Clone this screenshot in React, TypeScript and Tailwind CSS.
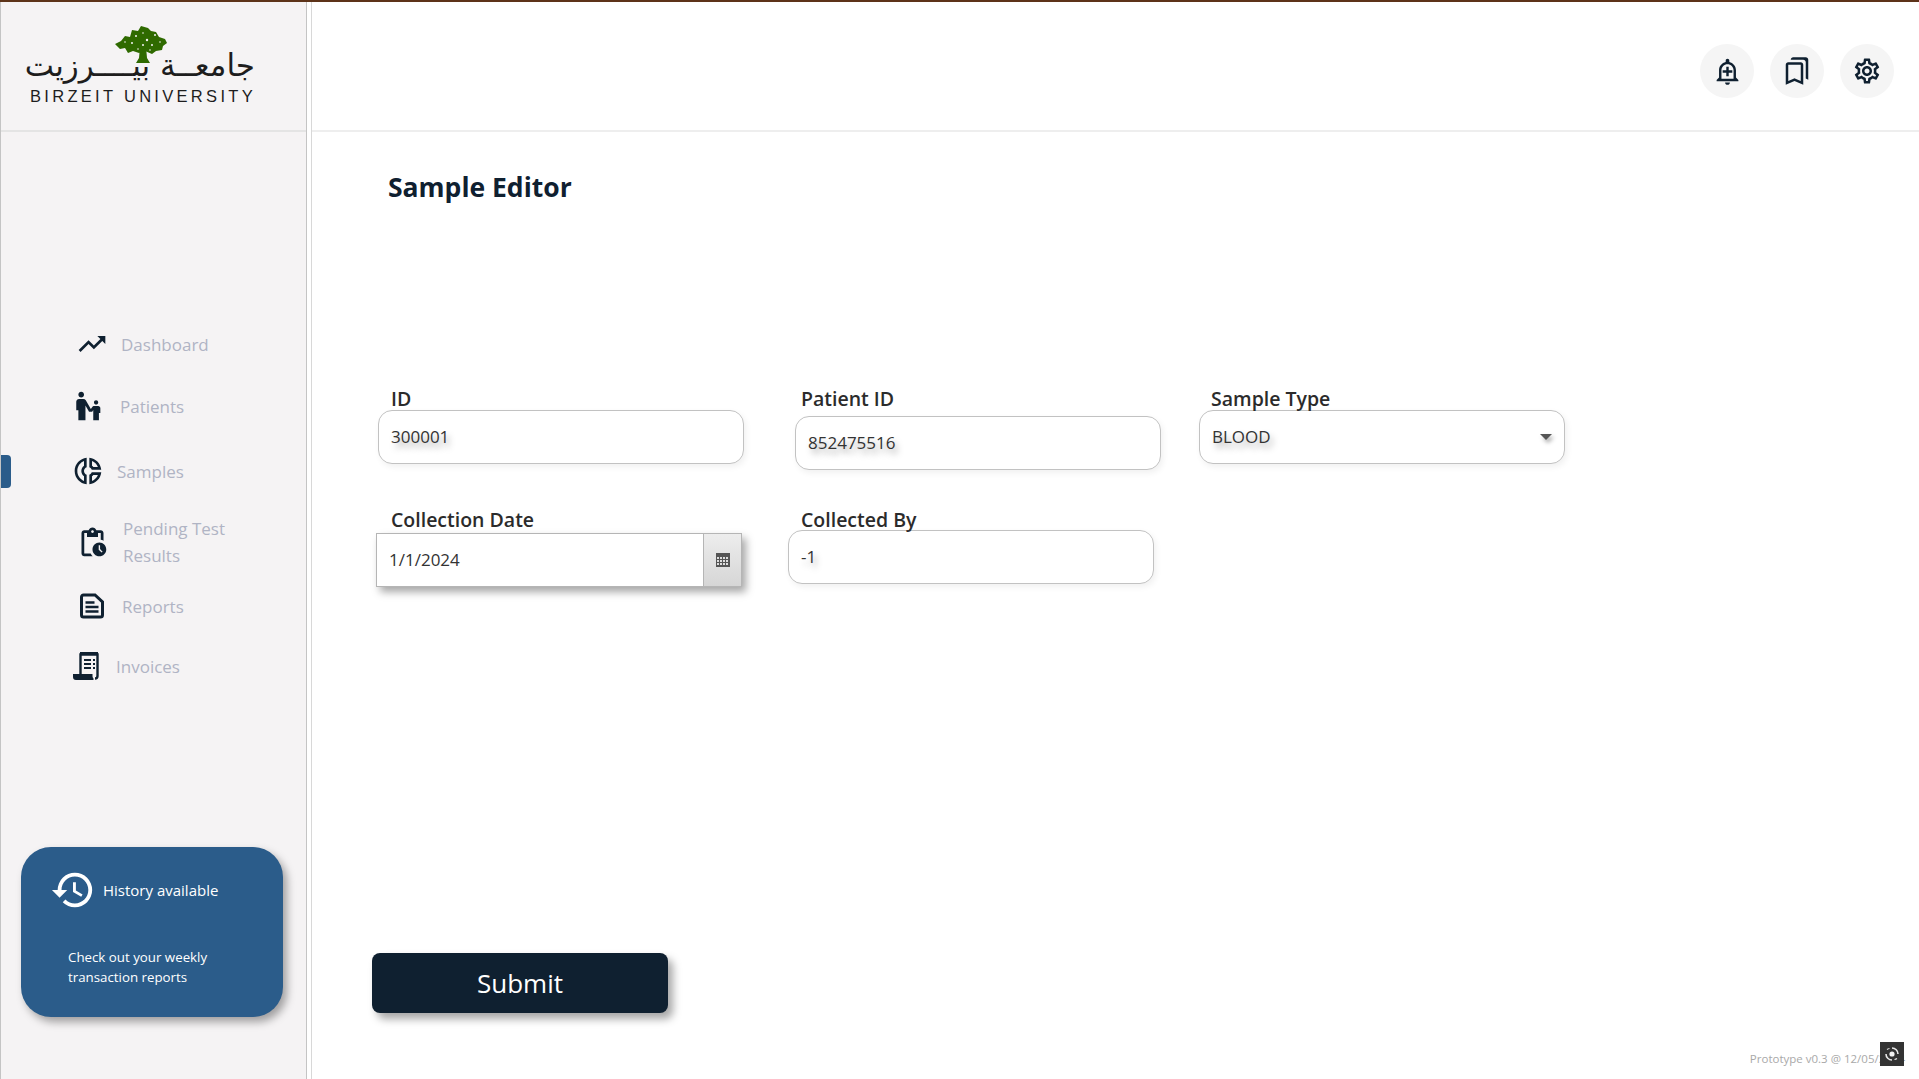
import type { ReactNode } from "react";
import {
  MdTrendingUp,
  MdEscalatorWarning,
  MdOutlineDonutSmall,
  MdOutlinePendingActions,
  MdHistory,
  MdOutlineAddAlert,
  MdOutlineBookmarks,
  MdOutlineSettings,
} from "react-icons/md";

const font = "font-['Open_Sans','Noto_Sans',sans-serif]";

function ReportsIcon() {
  return (
    <svg width="26" height="26" viewBox="0 0 26 26" fill="none" stroke="currentColor">
      <path d="M2.5 4a2 2 0 0 1 2-2H16l7.5 7v13a2 2 0 0 1-2 2h-17a2 2 0 0 1-2-2z" strokeWidth="3" />
      <path d="M6.5 9.5h9M6.5 14h13M6.5 18.5h13" strokeWidth="2.4" />
    </svg>
  );
}

function InvoicesIcon() {
  return (
    <svg width="27" height="28" viewBox="0 0 27 28" fill="none">
      <path d="M7.5 23V2.5h17V24a2.5 2.5 0 0 1-2.5 2.5" stroke="currentColor" strokeWidth="2.4" />
      <path d="M7 0h18v2H7z" fill="currentColor" />
      <path d="M11 7h7v2h-7zM20 7h2v2h-2zM11 11h7v2h-7zM20 11h2v2h-2zM11 15h7v2h-7zM20 15h2v2h-2z" fill="currentColor" />
      <path d="M0 22h19.5v2.5c0 .8.4 1.5 1 2v1.5H3a3 3 0 0 1-3-3z" fill="currentColor" />
    </svg>
  );
}

const navItems = [
  { label: "Dashboard", icon: <MdTrendingUp size={32} />, row: "mt-[196px] ml-[75px] h-[32px] gap-[13px]" },
  { label: "Patients", icon: <MdEscalatorWarning size={34} />, row: "mt-[29px] ml-[71px] h-[34px] gap-[14px]" },
  { label: "Samples", icon: <MdOutlineDonutSmall size={32} />, row: "mt-[32px] ml-[71px] h-[32px] gap-[13px]" },
  { label: "Pending Test Results", icon: <MdOutlinePendingActions size={33} />, row: "mt-[28px] ml-[75px] h-[54px] gap-[14px]", wrap: true },
  { label: "Reports", icon: <ReportsIcon />, row: "mt-[21px] ml-[78px] h-[32px] gap-[17px]" },
  { label: "Invoices", icon: <InvoicesIcon />, row: "mt-[28px] ml-[72px] h-[32px] gap-[16px]" },
];

function NavItem({ label, icon, row, wrap }: { label: string; icon: ReactNode; row: string; wrap?: boolean }) {
  return (
    <div className={`flex items-center ${row}`}>
      <span className="text-[#0f2030] shrink-0">{icon}</span>
      <span className={`text-[17px] leading-[27px] text-[#b0b4c4] ${wrap ? "w-[130px]" : ""}`}>{label}</span>
    </div>
  );
}

function Logo() {
  return (
    <div className="relative h-[130px] border-b-2 border-[#e4e4e4]">
      <svg className="absolute left-[113px] top-[23px]" width="58" height="39" viewBox="0 0 58 39">
        <path d="M26 22h6l1 11 3 5H22l3-5z" fill="#2f6a00" />
        <path
          d="M1 19l6-3 4-5 5 1 2-7 6 1 3-5 7 2 3 3 5 1 3 5 6 2 2 4-4 3-1 4-6 1-4 3-7-3-6 2-6-2-5 2-3-5-5 1z"
          fill="#2f6a00"
        />
        <g fill="#f5f3f4">
          <circle cx="22" cy="11" r="1" />
          <circle cx="29" cy="8" r="0.8" />
          <circle cx="33" cy="15" r="1.2" />
          <circle cx="41" cy="10" r="1" />
          <circle cx="29" cy="20" r="1" />
          <circle cx="38" cy="20" r="1" />
          <circle cx="46" cy="17" r="0.8" />
          <circle cx="18" cy="18" r="1" />
          <circle cx="24" cy="24" r="0.8" />
          <circle cx="36" cy="25" r="0.8" />
          <circle cx="11" cy="17" r="0.8" />
        </g>
      </svg>
      <div
        dir="rtl"
        className="absolute left-[28px] top-[41px] w-[226px] text-center whitespace-nowrap font-['DejaVu_Sans',sans-serif] text-[31px] leading-[44px] text-[#1d1d1d]"
      >
        جامعــة بيــــرزيت
      </div>
      <div className="absolute left-[29px] top-[85px] font-['Liberation_Sans',sans-serif] text-[16.5px] leading-[18px] tracking-[3.3px] whitespace-nowrap text-[#1d1d1d]">
        BIRZEIT UNIVERSITY
      </div>
    </div>
  );
}

function Sidebar() {
  return (
    <aside className="w-[307px] shrink-0 bg-[#f5f3f4] border-l border-r border-[#c4c4c4] flex flex-col relative">
      <Logo />
      <div className="absolute left-0 top-[453px] h-[33px] w-[10px] rounded-r-[4px] bg-[#2b5c8a]" />
      <nav className="flex flex-col">
        {navItems.map((item) => (
          <NavItem key={item.label} {...item} />
        ))}
      </nav>
      <div className="mt-[165px] ml-[20px] h-[170px] w-[262px] rounded-[30px] bg-[#2b5c8a] text-white shadow-[4px_5px_8px_rgba(0,0,0,0.35)] pt-[20px]">
        <div className="flex items-center pl-[29px] gap-[7px]">
          <MdHistory size={46} className="shrink-0" />
          <span className="text-[15px] leading-[22px]">History available</span>
        </div>
        <p className="mt-[34px] ml-[47px] text-[13.3px] leading-[20px]">
          Check out your weekly
          <br />
          transaction reports
        </p>
      </div>
    </aside>
  );
}

function Label({ children, className }: { children: string; className?: string }) {
  return (
    <div className={`text-[19.5px] font-semibold leading-[22px] text-[#2b2b2b] whitespace-nowrap ${className ?? "pl-[13px]"}`}>
      {children}
    </div>
  );
}

const valueText = "text-[17px] text-[#333] [text-shadow:3px_5px_6px_rgba(0,0,0,0.35)]";

function TextField({
  label,
  value,
  className,
  inputClass,
  labelClass,
}: {
  label: string;
  value: string;
  className: string;
  inputClass?: string;
  labelClass?: string;
}) {
  return (
    <div className={`w-[366px] shrink-0 ${className}`}>
      <Label className={labelClass}>{label}</Label>
      <div
        className={`h-[54px] rounded-[14px] border border-[#c2c2c2] bg-white flex items-center px-[12px] shadow-[2px_3px_6px_rgba(0,0,0,0.06)] ${valueText} ${inputClass ?? ""}`}
      >
        {value}
      </div>
    </div>
  );
}

function SelectField() {
  return (
    <div className="w-[366px] shrink-0 ml-[38px]">
      <Label className="pl-[12px]">Sample Type</Label>
      <div className={`h-[54px] rounded-[14px] border border-[#c2c2c2] bg-white flex items-center justify-between pl-[12px] pr-[12px] shadow-[2px_3px_6px_rgba(0,0,0,0.06)] ${valueText}`}>
        BLOOD
        <span className="h-0 w-0 border-x-[6px] border-t-[6px] border-x-transparent border-t-[#555] drop-shadow-[2px_3px_2px_rgba(0,0,0,0.35)]" />
      </div>
    </div>
  );
}

function DateField() {
  return (
    <div className="w-[366px] shrink-0">
      <Label className="pl-[15px]">Collection Date</Label>
      <div className="mt-[2px] h-[54px] border border-[#b5b5b5] bg-white flex shadow-[4px_5px_8px_rgba(0,0,0,0.35)]">
        <div className="flex-1 flex items-center pl-[12px] text-[17px] text-[#333]">1/1/2024</div>
        <div className="w-[38px] border-l border-[#b5b5b5] bg-linear-to-b from-[#ededed] to-[#d6d6d6] flex items-center justify-center">
          <svg width="14" height="14" viewBox="0 0 14 14">
            <rect width="14" height="14" fill="#555" />
            <g fill="#ddd">
              <rect x="1" y="4" width="2" height="2" />
              <rect x="4" y="4" width="2" height="2" />
              <rect x="7" y="4" width="2" height="2" />
              <rect x="10" y="4" width="2" height="2" />
              <rect x="1" y="7" width="2" height="2" />
              <rect x="4" y="7" width="2" height="2" />
              <rect x="7" y="7" width="2" height="2" />
              <rect x="10" y="7" width="2" height="2" />
              <rect x="1" y="10" width="2" height="2" />
              <rect x="4" y="10" width="2" height="2" />
              <rect x="7" y="10" width="2" height="2" />
              <rect x="10" y="10" width="2" height="2" />
            </g>
          </svg>
        </div>
      </div>
    </div>
  );
}

function HeaderButton({ children }: { children: ReactNode }) {
  return <div className="h-[54px] w-[54px] rounded-full bg-[#f5f5f5] flex items-center justify-center text-[#0f2030]">{children}</div>;
}

export default function App() {
  return (
    <div className={`${font} h-screen w-full overflow-hidden flex flex-col border-t-2 border-[#5d3319] bg-white relative`}>
      <div className="flex flex-1 min-h-0">
        <Sidebar />
        <main className="flex-1 ml-[4px] border-l border-[#d8d8d8] flex flex-col min-w-0">
          <header className="h-[130px] shrink-0 border-b-2 border-[#eeeeee] flex items-center justify-end gap-[16px] pr-[25px] pb-[4px] pt-[14px]">
            <HeaderButton>
              <MdOutlineAddAlert size={29} />
            </HeaderButton>
            <HeaderButton>
              <MdOutlineBookmarks size={30} />
            </HeaderButton>
            <HeaderButton>
              <MdOutlineSettings size={30} />
            </HeaderButton>
          </header>
          <h1 className="mt-[37px] ml-[76px] text-[26.5px] font-bold leading-[36px] text-[#0f2030]">Sample Editor</h1>
          <div className="mt-[183px] ml-[66px] flex items-start">
            <TextField label="ID" value="300001" className="" />
            <TextField label="Patient ID" value="852475516" className="ml-[51px]" inputClass="mt-[6px]" labelClass="pl-[6px]" />
            <SelectField />
          </div>
          <div className="mt-[39px] ml-[64px] flex items-start">
            <DateField />
            <TextField label="Collected By" value="-1" className="ml-[46px]" inputClass="-mt-[1px]" labelClass="pl-[13px]" />
          </div>
          <button className="mt-[366px] ml-[60px] h-[60px] w-[296px] rounded-[8px] bg-[#0f2030] text-[26px] text-white shadow-[5px_6px_8px_rgba(0,0,0,0.35)]">
            Submit
          </button>
        </main>
      </div>
      <div className="absolute right-[14px] bottom-[12px] text-[11.5px] leading-[16px] text-[#a9a9a9] whitespace-nowrap">
        Prototype v0.3 @ 12/05/2024
      </div>
      <div className="absolute left-[1880px] top-[1040px] h-[24px] w-[24px] bg-[#333] flex items-center justify-center">
        <svg width="16" height="16" viewBox="0 0 16 16" fill="none">
          <path d="M8 2a6 6 0 0 1 6 6M8 14a6 6 0 0 1-6-6" stroke="#e8e8e8" strokeWidth="1.6" />
          <path d="M3 3.5A6 6 0 0 1 5.5 2.5M13 12.5a6 6 0 0 1-2.5 1" stroke="#e8e8e8" strokeWidth="1.2" />
          <circle cx="8" cy="8" r="2.6" fill="#f2f2f2" />
        </svg>
      </div>
    </div>
  );
}
